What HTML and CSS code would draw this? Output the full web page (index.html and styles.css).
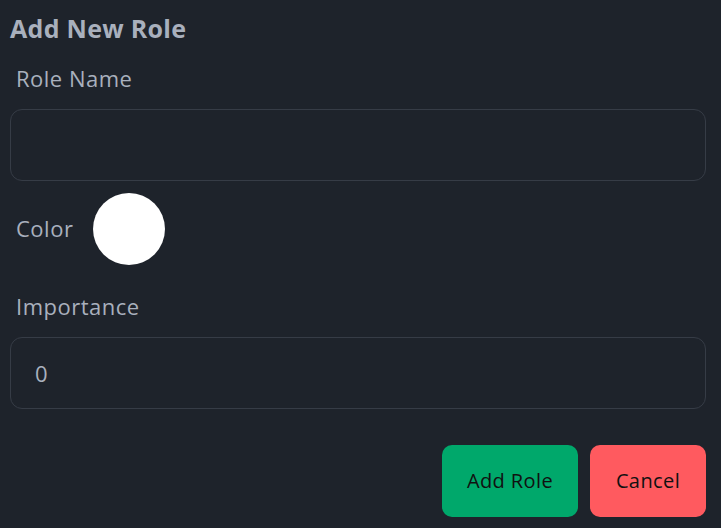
FILE: index.html
```html
<!DOCTYPE html>
<html>
<head>
<meta charset="utf-8">
<link rel="stylesheet" href="styles.css">
</head>
<body>
<div class="dialog">
  <h2 class="title">Add New Role</h2>
  <label class="label label-first">Role Name</label>
  <div class="input"></div>
  <div class="color-row">
    <span class="label label-inline">Color</span>
    <span class="swatch"></span>
  </div>
  <label class="label">Importance</label>
  <div class="input"><span class="value">0</span></div>
  <div class="actions">
    <button class="btn btn-add">Add Role</button>
    <button class="btn btn-cancel">Cancel</button>
  </div>
</div>
</body>
</html>
```
FILE: styles.css
```css
html, body {
  margin: 0;
  padding: 0;
  background: #1e232b;
  font-family: "Open Sans", "Noto Sans", sans-serif;
}
.dialog {
  padding: 10px 15px 0 10px;
  display: flex;
  flex-direction: column;
}
.title {
  margin: 0;
  font-size: 25px;
  font-weight: 700;
  color: #a9b0bd;
  line-height: 36px;
  letter-spacing: 0.3px;
}
.label {
  display: block;
  font-size: 22px;
  color: #a9b0bd;
  padding-left: 6px;
  line-height: 30px;
  letter-spacing: 0.5px;
}
.label-first {
  margin-top: 17px;
}
.label-inline {
  padding-bottom: 2px;
}
.input {
  margin-top: 16px;
  height: 70px;
  border: 1px solid #363c46;
  border-radius: 12px;
  display: flex;
  align-items: center;
  padding-left: 24px;
}
.value {
  font-size: 22px;
  color: #a9b0bd;
}
.color-row {
  display: flex;
  align-items: center;
  gap: 20px;
  margin-top: 12px;
  margin-bottom: 26px;
}
.swatch {
  width: 72px;
  height: 72px;
  border-radius: 50%;
  background: #ffffff;
}
.actions {
  display: flex;
  justify-content: flex-end;
  gap: 12px;
  margin-top: 36px;
}
.btn {
  height: 72px;
  border: none;
  border-radius: 10px;
  font-family: inherit;
  font-size: 20px;
  letter-spacing: 0.4px;
  color: #111;
  padding: 0 0 2px 0;
}
.btn-add {
  width: 136px;
  background: #00a86b;
}
.btn-cancel {
  width: 116px;
  background: #ff5a5f;
}
```
